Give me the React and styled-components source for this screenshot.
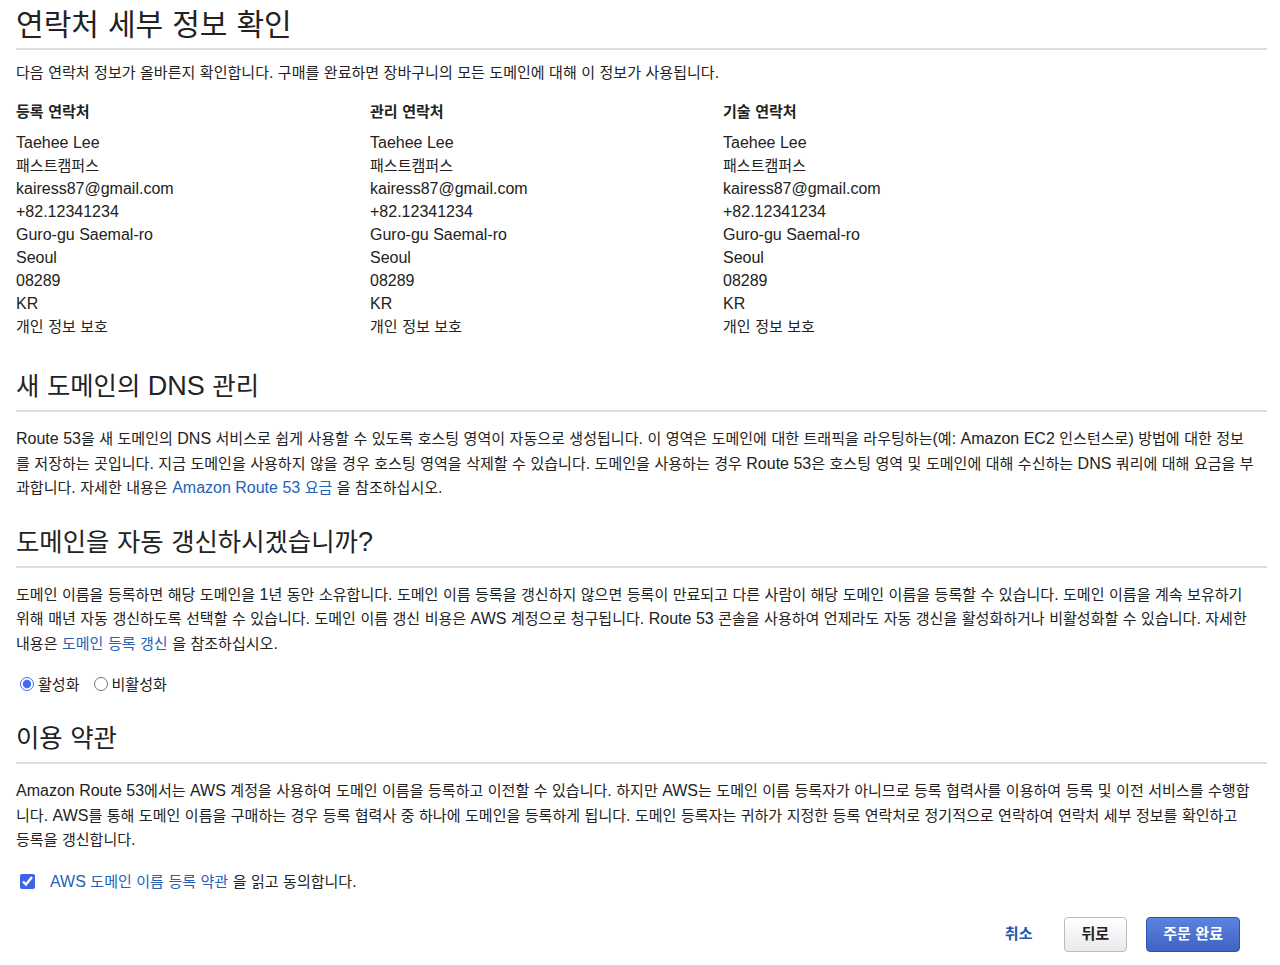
import React from "react";
import styled, { createGlobalStyle } from "styled-components";

const GlobalStyle = createGlobalStyle`
    body {
        margin: 0;
        background: #ffffff;
        color: #222222;
        font-family: "Liberation Sans", "Noto Sans CJK KR", sans-serif;
        font-size: 16px;
    }
`;

const HANGUL = /([\uAC00-\uD7A3\u3131-\u318E]+)/;

// hangul in the reference font is narrower than Noto CJK, so shrink hangul runs
function ko(text) {
    return text.split(HANGUL).map((part, i) => {
        if (i % 2 === 1) return <Han key={i}>{part}</Han>;
        return part;
    });
}

function Line(props) {
    return props.parts.map((p, i) => {
        if (typeof p === "string") return <React.Fragment key={i}>{ko(p)}</React.Fragment>;
        return <Link key={i} href="#">{ko(p.link)}</Link>;
    });
}

function Para(props) {
    return (
        <Text>
            {props.lines.map((l, i) => (
                <React.Fragment key={i}>
                    {i > 0 && <br />}
                    <Line parts={l} />
                </React.Fragment>
            ))}
        </Text>
    );
}

const contact = [
    "Taehee Lee",
    "패스트캠퍼스",
    "kairess87@gmail.com",
    "+82.12341234",
    "Guro-gu Saemal-ro",
    "Seoul",
    "08289",
    "KR",
    "개인 정보 보호",
];

const columns = ["등록 연락처", "관리 연락처", "기술 연락처"];

const dnsText = [
    ["Route 53을 새 도메인의 DNS 서비스로 쉽게 사용할 수 있도록 호스팅 영역이 자동으로 생성됩니다. 이 영역은 도메인에 대한 트래픽을 라우팅하는(예: Amazon EC2 인스턴스로) 방법에 대한 정보"],
    ["를 저장하는 곳입니다. 지금 도메인을 사용하지 않을 경우 호스팅 영역을 삭제할 수 있습니다. 도메인을 사용하는 경우 Route 53은 호스팅 영역 및 도메인에 대해 수신하는 DNS 쿼리에 대해 요금을 부"],
    ["과합니다. 자세한 내용은 ", { link: "Amazon Route 53 요금" }, " 을 참조하십시오."],
];

const renewText = [
    ["도메인 이름을 등록하면 해당 도메인을 1년 동안 소유합니다. 도메인 이름 등록을 갱신하지 않으면 등록이 만료되고 다른 사람이 해당 도메인 이름을 등록할 수 있습니다. 도메인 이름을 계속 보유하기"],
    ["위해 매년 자동 갱신하도록 선택할 수 있습니다. 도메인 이름 갱신 비용은 AWS 계정으로 청구됩니다. Route 53 콘솔을 사용하여 언제라도 자동 갱신을 활성화하거나 비활성화할 수 있습니다. 자세한"],
    ["내용은 ", { link: "도메인 등록 갱신" }, " 을 참조하십시오."],
];

const termsText = [
    ["Amazon Route 53에서는 AWS 계정을 사용하여 도메인 이름을 등록하고 이전할 수 있습니다. 하지만 AWS는 도메인 이름 등록자가 아니므로 등록 협력사를 이용하여 등록 및 이전 서비스를 수행합"],
    ["니다. AWS를 통해 도메인 이름을 구매하는 경우 등록 협력사 중 하나에 도메인을 등록하게 됩니다. 도메인 등록자는 귀하가 지정한 등록 연락처로 정기적으로 연락하여 연락처 세부 정보를 확인하고"],
    ["등록을 갱신합니다."],
];

export default function App() {
    return (
        <Page>
            <GlobalStyle />
            <Title main>{ko("연락처 세부 정보 확인")}</Title>
            <Intro>{ko("다음 연락처 정보가 올바른지 확인합니다. 구매를 완료하면 장바구니의 모든 도메인에 대해 이 정보가 사용됩니다.")}</Intro>
            <Contacts>
                {columns.map((c) => (
                    <Column key={c}>
                        <ColHead>{ko(c)}</ColHead>
                        {contact.map((row, i) => (
                            <Row key={i}>{ko(row)}</Row>
                        ))}
                    </Column>
                ))}
            </Contacts>

            <Title>{ko("새 도메인의 DNS 관리")}</Title>
            <Para lines={dnsText} />

            <Title>{ko("도메인을 자동 갱신하시겠습니까?")}</Title>
            <Para lines={renewText} />
            <Options>
                <Option>
                    <Radio type="radio" name="renew" defaultChecked />
                    {ko("활성화")}
                </Option>
                <Option>
                    <Radio type="radio" name="renew" />
                    {ko("비활성화")}
                </Option>
            </Options>

            <Title after>{ko("이용 약관")}</Title>
            <Para lines={termsText} />
            <Agree>
                <Check type="checkbox" defaultChecked />
                <span>
                    <Link href="#">{ko("AWS 도메인 이름 등록 약관")}</Link>
                    {ko(" 을 읽고 동의합니다.")}
                </span>
            </Agree>

            <Footer>
                <CancelLink href="#">{ko("취소")}</CancelLink>
                <Button>{ko("뒤로")}</Button>
                <Button primary>{ko("주문 완료")}</Button>
            </Footer>
        </Page>
    );
}

const Page = styled.div`
    padding: 0 13px 12px 16px;
    display: flex;
    flex-direction: column;
`;

const Han = styled.span`
    font-family: "Noto Sans CJK KR", sans-serif;
    font-size: 0.94em;
    line-height: 1;
`;

const Title = styled.h1`
    margin: ${props => props.main ? 7 : props.after ? 25 : 24}px 0 0 0;
    font-weight: 400;
    font-size: ${props => props.main ? 32 : 27}px;
    line-height: 34px;
    color: #222222;
    padding-bottom: 7px;
    border-bottom: 2px solid #dddddd;
    white-space: nowrap;
`;

const Intro = styled.p`
    margin: 11px 0 0 0;
    font-size: 16px;
    line-height: 24px;
`;

const Contacts = styled.div`
    display: grid;
    grid-template-columns: 354px 353px 1fr;
    margin: 15px 0 7px 0;
`;

const Column = styled.div`
    display: flex;
    flex-direction: column;
`;

const ColHead = styled.div`
    font-weight: 700;
    line-height: 23px;
    margin-bottom: 8px;
`;

const Row = styled.div`
    line-height: 23px;
`;

const Text = styled.p`
    margin: 15px 0 0 0;
    line-height: 24.5px;
    white-space: nowrap;
`;

const Link = styled.a`
    color: #2462b8;
    text-decoration: none;
`;

const Options = styled.div`
    display: flex;
    align-items: center;
    gap: 10px;
    margin-top: 16px;
    height: 24px;
`;

const Option = styled.label`
    display: flex;
    align-items: center;
    gap: 4px;
`;

const Radio = styled.input`
    width: 14px;
    height: 14px;
    margin: 0 0 0 4px;
    accent-color: #3f6cf0;
`;

const Agree = styled.label`
    display: flex;
    align-items: center;
    gap: 15px;
    margin-top: 17px;
    height: 24px;
    padding-left: 4px;
`;

const Check = styled.input`
    width: 15px;
    height: 15px;
    margin: 0;
    accent-color: #3f63e6;
`;

const Footer = styled.div`
    display: flex;
    justify-content: flex-end;
    align-items: center;
    margin-top: 23px;
    padding-right: 27px;
`;

const CancelLink = styled.a`
    color: #2559ad;
    font-weight: 700;
    text-decoration: none;
    margin-right: 31px;
`;

const Button = styled.button`
    font-family: "Liberation Sans", "Noto Sans CJK KR", sans-serif;
    font-size: 16px;
    font-weight: 700;
    height: 35px;
    padding: 0 ${props => props.primary ? 16 : 17}px;
    margin-left: ${props => props.primary ? 19 : 0}px;
    border-radius: 4px;
    cursor: pointer;
    color: ${props => props.primary ? '#ffffff' : '#222222'};
    border: 1px solid ${props => props.primary ? '#2e52ad' : '#bcbcbc'};
    background: ${props => props.primary
        ? 'linear-gradient(#5b84de, #3e63c4)'
        : 'linear-gradient(#ffffff, #e9e9e9)'};
`;
